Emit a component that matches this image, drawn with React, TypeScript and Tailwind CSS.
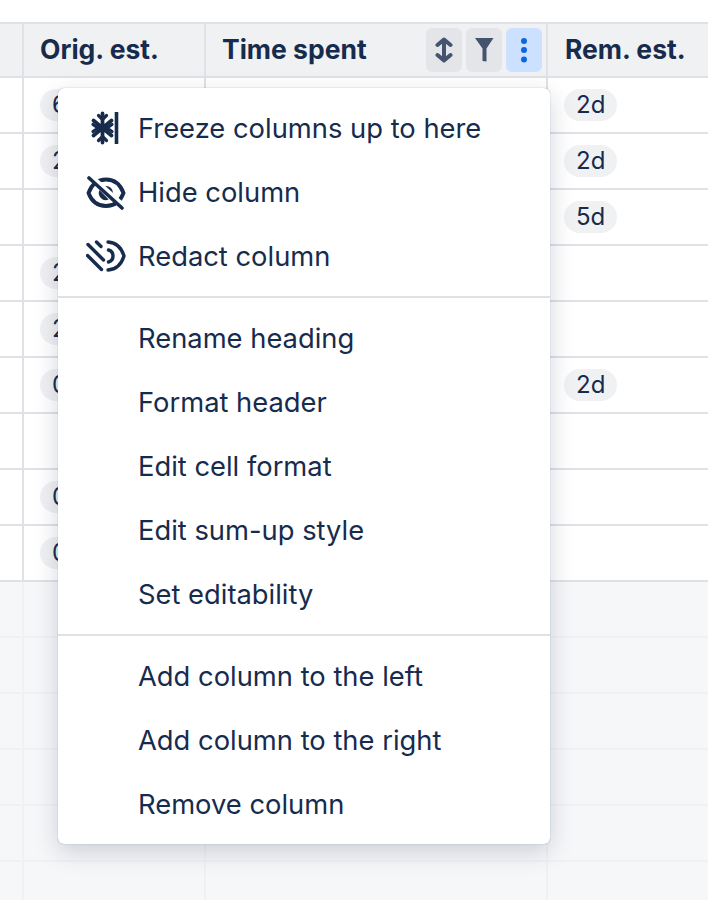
const rows = [
  { orig: "6d", rem: "2d" },
  { orig: "2d", rem: "2d" },
  { orig: "", rem: "5d" },
  { orig: "2d", rem: "" },
  { orig: "2d", rem: "" },
  { orig: "0d", rem: "2d" },
  { orig: "", rem: "" },
  { orig: "0d", rem: "" },
  { orig: "0d", rem: "" },
];

function Pill({ text }: { text: string }) {
  return (
    <span className="inline-flex h-8 items-center rounded-full bg-[#f0f1f3] px-3 text-[24px] text-[#172b4d]">
      {text}
    </span>
  );
}

function FreezeIcon() {
  return (
    <svg width="40" height="34" viewBox="0 0 40 34" fill="none" stroke="#172b4d" strokeLinecap="round">
      <path d="M30.500 1v32" strokeWidth="3.600" strokeLinecap="butt" />
      <path d="M16.500 2.500v29M7.500 9.500l18 15M25.500 9.500l-18 15" strokeWidth="3.800" />
      <path d="M12.500 4.500l4 4 4-4M12.500 29.500l4-4 4 4M7 13.500l5 3.500-5 3.500M26 13.500l-5 3.500 5 3.500" strokeWidth="3.200" />
    </svg>
  );
}

function HideIcon() {
  return (
    <svg width="40" height="36" viewBox="0 0 40 36" fill="none" stroke="#172b4d" strokeLinecap="round">
      <path d="M2.500 19C6 9.500 12 5.500 20 5.500s14 4 17.500 13.500C34 28.500 28 32 20 32S6 28.500 2.500 19z" strokeWidth="3.800" />
      <path d="M20 12a7 7 0 0 1 7 7c0 1.400-.4 2.700-1.100 3.800L15.200 13.800C16.500 12.700 18.100 12 20 12z" fill="#172b4d" stroke="none" />
      <path d="M13.500 16a7 7 0 0 0 9.200 9.400z" fill="#172b4d" stroke="none" />
      <path d="M3 4l33 30" stroke="#ffffff" strokeWidth="5" strokeLinecap="butt" transform="translate(1.800 -1.800)" />
      <path d="M3 4l33 30" strokeWidth="3.600" />
    </svg>
  );
}

function RedactIcon() {
  return (
    <svg width="40" height="32" viewBox="0 0 40 32" fill="none" stroke="#172b4d" strokeLinecap="round">
      <path d="M10.500 2l4.500 4.500M2 4.500l15.500 15.500M1.500 15.500l14 14" strokeWidth="3.400" />
      <path d="M22 2c8 .5 13.500 6 16 14-2.500 8-8 13.500-16 14" strokeWidth="3.400" />
      <path d="M22.500 10c2.800.8 4.500 3 4.500 6s-1.700 5.200-4.500 6" strokeWidth="3.400" />
    </svg>
  );
}

function HeaderButton({ active, children }: { active?: boolean; children: React.ReactNode }) {
  return (
    <div className={`flex h-11 w-9 items-center justify-center rounded-md ${active ? "bg-[#cce0ff]" : "bg-[#e4e5e9]"}`}>
      {children}
    </div>
  );
}

function MenuItem({ label, icon }: { label: string; icon?: React.ReactNode }) {
  return (
    <div className="flex h-16 items-center text-[#172b4d]">
      <div className="flex w-20 shrink-0 items-center pl-7">{icon}</div>
      <span className="pt-[2px] text-[27.35px] leading-none">{label}</span>
    </div>
  );
}

export default function App() {
  return (
    <div className="relative h-[900px] w-[708px] overflow-hidden bg-white font-['Inter',sans-serif]">
      <div className="h-[22px]" />
      {/* header */}
      <div className="flex h-[56px] border-y-2 border-[#dfe1e6] bg-[#f0f1f3] text-[26.500px] font-bold text-[#172b4d]">
        <div className="w-6 shrink-0 border-r-2 border-[#dfe1e6]" />
        <div className="flex w-[182px] shrink-0 items-center border-r-2 border-[#dfe1e6] pl-4">Orig. est.</div>
        <div className="flex w-[342px] shrink-0 items-center justify-between border-r-2 border-[#dfe1e6] pl-4 pr-1">
          <span>Time spent</span>
          <div className="flex gap-1">
            <HeaderButton>
              <svg width="18" height="26" viewBox="0 0 18 26" fill="none" stroke="#44546f" strokeWidth="4" strokeLinecap="round" strokeLinejoin="round">
                <path d="M2.500 8L9 2.500 15.500 8M2.500 18L9 23.500 15.500 18M9 3v20" />
              </svg>
            </HeaderButton>
            <HeaderButton>
              <svg width="20" height="26" viewBox="0 0 20 26" fill="#44546f">
                <path d="M1 1h18.500l-7 10.500V24.500L8.500 24V11.500z" />
              </svg>
            </HeaderButton>
            <HeaderButton active>
              <svg width="8" height="26" viewBox="0 0 8 26" fill="#0c66e4">
                <circle cx="4" cy="4" r="3" />
                <circle cx="4" cy="13" r="3" />
                <circle cx="4" cy="22.500" r="3" />
              </svg>
            </HeaderButton>
          </div>
        </div>
        <div className="flex flex-1 items-center pl-[17px]">Rem. est.</div>
      </div>
      {/* data rows */}
      {rows.map((r, i) => (
        <div key={i} className="flex h-14 border-b-2 border-[#dfe1e6] bg-white">
          <div className="w-6 shrink-0 border-r-2 border-[#dfe1e6]" />
          <div className="flex w-[182px] shrink-0 items-center border-r-2 border-[#dfe1e6] pl-4">
            {r.orig && <Pill text={r.orig} />}
          </div>
          <div className="w-[342px] shrink-0 border-r-2 border-[#dfe1e6]" />
          <div className="flex flex-1 items-center pl-4">{r.rem && <Pill text={r.rem} />}</div>
        </div>
      ))}
      {/* empty rows */}
      {[0, 1, 2, 3, 4, 5].map((i) => (
        <div key={i} className="flex h-14 border-b-2 border-[#f0f1f3] bg-[#f6f7f9]">
          <div className="w-6 shrink-0 border-r-2 border-[#f0f1f3]" />
          <div className="w-[182px] shrink-0 border-r-2 border-[#f0f1f3]" />
          <div className="w-[342px] shrink-0 border-r-2 border-[#f0f1f3]" />
          <div className="flex-1" />
        </div>
      ))}
      {/* column menu */}
      <div className="absolute left-[58px] top-[88px] w-[492px] rounded-md bg-white py-2 shadow-[0_0_1px_rgba(9,30,66,0.5),0_8px_24px_rgba(9,30,66,0.18)]">
        <MenuItem label="Freeze columns up to here" icon={<FreezeIcon />} />
        <MenuItem label="Hide column" icon={<HideIcon />} />
        <MenuItem label="Redact column" icon={<RedactIcon />} />
        <div className="my-2 h-[2px] bg-[#dfe1e6]" />
        <MenuItem label="Rename heading" />
        <MenuItem label="Format header" />
        <MenuItem label="Edit cell format" />
        <MenuItem label="Edit sum-up style" />
        <MenuItem label="Set editability" />
        <div className="my-2 h-[2px] bg-[#dfe1e6]" />
        <MenuItem label="Add column to the left" />
        <MenuItem label="Add column to the right" />
        <MenuItem label="Remove column" />
      </div>
    </div>
  );
}
